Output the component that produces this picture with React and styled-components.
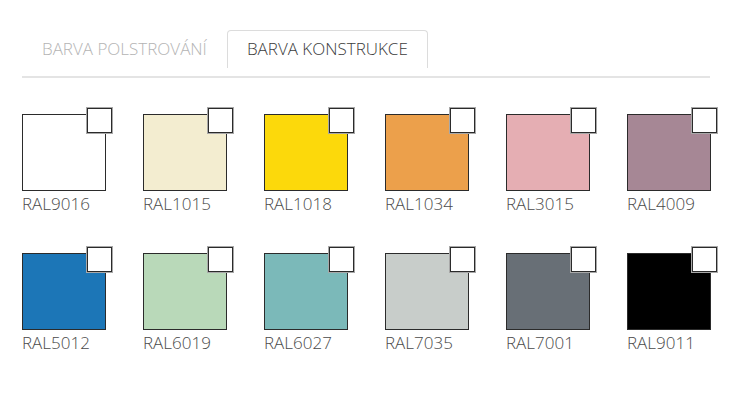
import React, { useState } from 'react';
import styled, { createGlobalStyle } from 'styled-components';

const GlobalStyle = createGlobalStyle`
  body {
    margin: 0;
    background: #fff;
    font-family: "Open Sans", "Liberation Sans", sans-serif;
  }
`;

const Page = styled.div`
  padding: 30px 0 0 22px;
  width: 688px;
`;

const TabList = styled.div`
  display: flex;
`;

const Tab = styled.button`
  font-family: inherit;
  font-size: 17px;
  font-weight: 300;
  line-height: 22px;
  padding: 7px 19px 8px 19px;
  margin: 0;
  background: #fff;
  color: ${props => props.active ? '#3c3c3c' : '#b4b4b4'};
  border: 1px solid ${props => props.active ? '#dcdcdc' : 'transparent'};
  border-bottom: none;
  border-radius: 4px 4px 0 0;
  cursor: pointer;
`;

const Divider = styled.div`
  height: 2px;
  background: #e4e4e4;
  margin-top: 8px;
`;

const SwatchGrid = styled.div`
  display: grid;
  grid-template-columns: repeat(6, 84px);
  column-gap: 37px;
  row-gap: 38px;
  padding-top: 36px;
`;

const Item = styled.div`
  display: flex;
  flex-direction: column;
`;

const Swatch = styled.div`
  position: relative;
  box-sizing: border-box;
  width: 84px;
  height: 77px;
  background: ${props => props.color};
  border: 1px solid #2b2b2b;
  cursor: pointer;
`;

const Check = styled.span`
  position: absolute;
  top: -7px;
  right: -7px;
  box-sizing: border-box;
  width: 25px;
  height: 25px;
  background: #fff;
  border: 1px solid #2b2b2b;
  box-shadow: 0 0 0 1px #a8a8a8;
`;

const Label = styled.div`
  font-size: 17px;
  font-weight: 300;
  line-height: 22px;
  margin-top: 2px;
  color: #4a4a4a;
`;

const colors = [
  { code: 'RAL9016', hex: '#ffffff' },
  { code: 'RAL1015', hex: '#f3edd0' },
  { code: 'RAL1018', hex: '#fcd90b' },
  { code: 'RAL1034', hex: '#eca04b' },
  { code: 'RAL3015', hex: '#e5aeb3' },
  { code: 'RAL4009', hex: '#a68795' },
  { code: 'RAL5012', hex: '#1c76b7' },
  { code: 'RAL6019', hex: '#b9d9b9' },
  { code: 'RAL6027', hex: '#7bb9b9' },
  { code: 'RAL7035', hex: '#c8cdca' },
  { code: 'RAL7001', hex: '#686f76' },
  { code: 'RAL9011', hex: '#000000' },
];

const App = () => {
  const [tab, setTab] = useState('konstrukce');

  return (
    <Page>
      <GlobalStyle />
      <TabList>
        <Tab active={tab === 'polstrovani'} onClick={() => setTab('polstrovani')}>
          BARVA POLSTROVÁNÍ
        </Tab>
        <Tab active={tab === 'konstrukce'} onClick={() => setTab('konstrukce')}>
          BARVA KONSTRUKCE
        </Tab>
      </TabList>
      <Divider />
      <SwatchGrid>
        {colors.map(c => (
          <Item key={c.code}>
            <Swatch color={c.hex}>
              <Check />
            </Swatch>
            <Label>{c.code}</Label>
          </Item>
        ))}
      </SwatchGrid>
    </Page>
  );
};

export default App;
